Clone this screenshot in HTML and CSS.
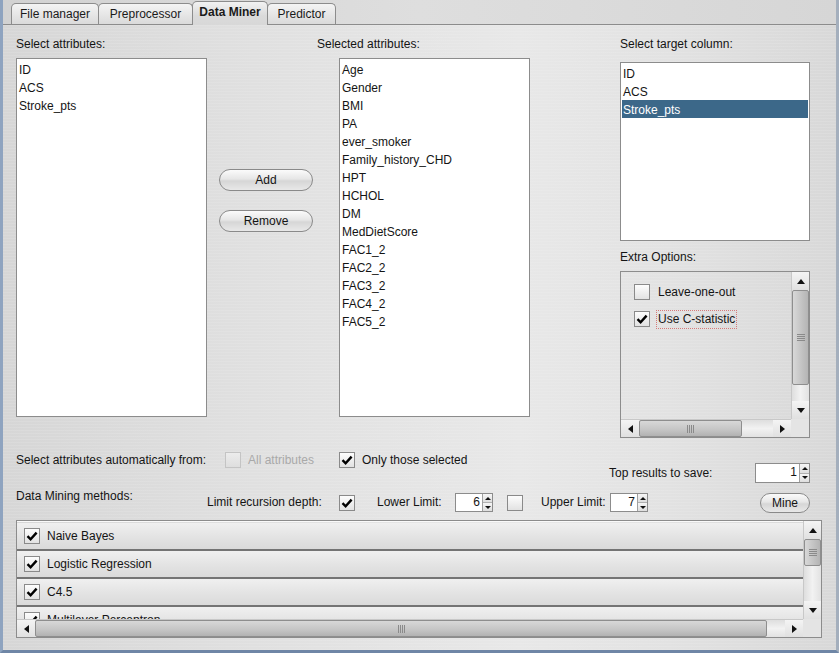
FILE: index.html
```html
<!DOCTYPE html>
<html>
<head>
<meta charset="utf-8">
<link rel="stylesheet" href="styles.css">
</head>
<body>
<div class="window">
  <div class="tabs">
    <div class="tab t1">File manager</div>
    <div class="tab t2">Preprocessor</div>
    <div class="tab t3 active">Data Miner</div>
    <div class="tab t4">Predictor</div>
  </div>
  <div class="panel">
    <div class="top">
      <div class="col col-a">
        <div class="label">Select attributes:</div>
        <div class="list list-big">
          <div class="item">ID</div>
          <div class="item">ACS</div>
          <div class="item">Stroke_pts</div>
        </div>
      </div>
      <div class="col col-b">
        <div class="btn btn-wide">Add</div>
        <div class="btn btn-wide btn-second">Remove</div>
      </div>
      <div class="col col-c">
        <div class="label">Selected attributes:</div>
        <div class="list list-big list-c">
          <div class="item">Age</div>
          <div class="item">Gender</div>
          <div class="item">BMI</div>
          <div class="item">PA</div>
          <div class="item">ever_smoker</div>
          <div class="item">Family_history_CHD</div>
          <div class="item">HPT</div>
          <div class="item">HCHOL</div>
          <div class="item">DM</div>
          <div class="item">MedDietScore</div>
          <div class="item">FAC1_2</div>
          <div class="item">FAC2_2</div>
          <div class="item">FAC3_2</div>
          <div class="item">FAC4_2</div>
          <div class="item">FAC5_2</div>
        </div>
      </div>
      <div class="col col-d">
        <div class="label label-tall">Select target column:</div>
        <div class="list list-target">
          <div class="item">ID</div>
          <div class="item">ACS</div>
          <div class="item selected">Stroke_pts</div>
        </div>
        <div class="label label-extra">Extra Options:</div>
        <div class="scrollpane extra">
          <div class="extra-content">
            <div class="opt">
              <span class="cb"></span>
              <span class="opt-label">Leave-one-out</span>
            </div>
            <div class="opt">
              <span class="cb"><svg width="14" height="14" viewBox="0 0 14 14"><path d="M2.5 7.2 L5.6 10.3 L11.6 3.6" fill="none" stroke="#000" stroke-width="2.4"/></svg></span>
              <span class="opt-label focus">Use C-statistic</span>
            </div>
          </div>
          <div class="vbar">
            <div class="abtn"><span class="tri up"></span></div>
            <div class="vthumb extra-vthumb"><span class="hgrip"></span></div>
            <div class="track"></div>
            <div class="abtn"><span class="tri down"></span></div>
          </div>
          <div class="hbar">
            <div class="abtn"><span class="tri left"></span></div>
            <div class="hthumb extra-hthumb"><span class="vgrip"></span></div>
            <div class="track"></div>
            <div class="abtn"><span class="tri right"></span></div>
          </div>
          <div class="corner"></div>
        </div>
      </div>
    </div>

    <div class="mid">
      <div class="row row1">
        <div class="grp grp-auto">
          <span class="txt w-auto">Select attributes automatically from:</span>
          <span class="cb disabled"></span>
          <span class="txt dis w-all">All attributes</span>
          <span class="cb"><svg width="14" height="14" viewBox="0 0 14 14"><path d="M2.5 7.2 L5.6 10.3 L11.6 3.6" fill="none" stroke="#000" stroke-width="2.4"/></svg></span>
          <span class="txt gap7">Only those selected</span>
        </div>
        <div class="grp grp-top">
          <span class="txt w-top">Top results to save:</span>
          <div class="spin spin-top">
            <span class="spin-val">1</span>
            <span class="spin-btns"><span class="sb"><span class="tri up small"></span></span><span class="sb"><span class="tri down small"></span></span></span>
          </div>
        </div>
      </div>
      <div class="row row2">
        <span class="txt w-dm dm-label">Data Mining methods:</span>
        <div class="grp grp-limit">
          <span class="txt w-lrd">Limit recursion depth:</span>
          <span class="cb"><svg width="14" height="14" viewBox="0 0 14 14"><path d="M2.5 7.2 L5.6 10.3 L11.6 3.6" fill="none" stroke="#000" stroke-width="2.4"/></svg></span>
          <span class="txt w-lower">Lower Limit:</span>
          <div class="spin spin-small">
            <span class="spin-val">6</span>
            <span class="spin-btns"><span class="sb"><span class="tri up small"></span></span><span class="sb"><span class="tri down small"></span></span></span>
          </div>
          <span class="cb cb-upper"></span>
          <span class="txt w-upper">Upper Limit:</span>
          <div class="spin spin-small">
            <span class="spin-val">7</span>
            <span class="spin-btns"><span class="sb"><span class="tri up small"></span></span><span class="sb"><span class="tri down small"></span></span></span>
          </div>
        </div>
        <div class="btn btn-mine">Mine</div>
      </div>
    </div>

    <div class="scrollpane methods">
      <div class="methods-content">
        <div class="mrow">
          <span class="cb"><svg width="14" height="14" viewBox="0 0 14 14"><path d="M2.5 7.2 L5.6 10.3 L11.6 3.6" fill="none" stroke="#000" stroke-width="2.4"/></svg></span>
          <span class="mlabel">Naive Bayes</span>
        </div>
        <div class="mrow">
          <span class="cb"><svg width="14" height="14" viewBox="0 0 14 14"><path d="M2.5 7.2 L5.6 10.3 L11.6 3.6" fill="none" stroke="#000" stroke-width="2.4"/></svg></span>
          <span class="mlabel">Logistic Regression</span>
        </div>
        <div class="mrow">
          <span class="cb"><svg width="14" height="14" viewBox="0 0 14 14"><path d="M2.5 7.2 L5.6 10.3 L11.6 3.6" fill="none" stroke="#000" stroke-width="2.4"/></svg></span>
          <span class="mlabel">C4.5</span>
        </div>
        <div class="mrow">
          <span class="cb"><svg width="14" height="14" viewBox="0 0 14 14"><path d="M2.5 7.2 L5.6 10.3 L11.6 3.6" fill="none" stroke="#000" stroke-width="2.4"/></svg></span>
          <span class="mlabel">Multilayer Perceptron</span>
        </div>
      </div>
      <div class="vbar">
        <div class="abtn"><span class="tri up"></span></div>
        <div class="vthumb methods-vthumb"><span class="hgrip"></span></div>
        <div class="track"></div>
        <div class="abtn"><span class="tri down"></span></div>
      </div>
      <div class="hbar">
        <div class="abtn"><span class="tri left"></span></div>
        <div class="hthumb methods-hthumb"><span class="vgrip"></span></div>
        <div class="track"></div>
        <div class="abtn"><span class="tri right"></span></div>
      </div>
      <div class="corner"></div>
    </div>
  </div>
</div>
</body>
</html>
```

FILE: styles.css
```css
* { box-sizing: border-box; }
html, body { margin: 0; padding: 0; }
body {
  width: 839px;
  height: 653px;
  overflow: hidden;
  font-family: "Liberation Sans", Arial, sans-serif;
  font-size: 12px;
  color: #141414;
  background: #c8d0da;
}
.window {
  width: 839px;
  height: 653px;
  display: flex;
  flex-direction: column;
  border-left: 3px solid #8ea3bf;
  border-right: 3px solid #a4afbd;
  border-bottom: 3px solid #6f86a6;
  background: #dcdcdc;
}

/* tabs */
.tabs {
  height: 25px;
  flex: none;
  display: flex;
  align-items: flex-end;
  padding-left: 8px;
  border-bottom: 1px solid #8c8c8c;
  background: linear-gradient(90deg, #d2d2d2, #dedede 50%, #d6d6d6);
}
.tab {
  height: 21px;
  border: 1px solid #8c8c8c;
  border-bottom: none;
  border-radius: 5px 5px 0 0;
  background: linear-gradient(#f4f4f4, #dadada);
  text-align: center;
  line-height: 20px;
  margin-right: -1px;
  color: #1a1a1a;
}
.t1 { width: 88px; }
.t2 { width: 95px; }
.t3 { width: 76px; }
.t4 { width: 69px; }
.tab.active {
  height: 24px;
  margin-bottom: -1px;
  font-weight: bold;
  line-height: 21px;
  background: linear-gradient(#f2f2f2, #dadada 60%, #d8d8d8);
  position: relative;
  z-index: 1;
}

/* panel */
.panel {
  flex: 1;
  padding: 12px 0 0 13px;
  background:
    repeating-linear-gradient(0deg, rgba(255,255,255,0.10) 0 1px, rgba(0,0,0,0) 1px 3px),
    linear-gradient(90deg, #d6d6d6 0%, #e0e0e0 30%, #e8e8e8 62%, #e2e2e2 80%, #d8d8d8 100%);
}
.top {
  display: flex;
  height: 401px;
}
.col { display: flex; flex-direction: column; }
.col-a { width: 191px; }
.col-b { margin-left: 12px; width: 94px; padding-top: 132px; }
.col-c { margin-left: 4px; width: 213px; }
.col-d { margin-left: 90px; width: 190px; }

.label {
  height: 21px;
  line-height: 15px;
  white-space: nowrap;
}
.label-tall { height: 25px; }
.label-extra { margin-top: 9px; }

.list {
  background: #fff;
  border: 1px solid #8c8c8c;
  padding-top: 1px;
}
.list-big { height: 359px; width: 191px; }
.list-c { margin-left: 22px; }
.list-target { height: 180px; }
.item {
  height: 18px;
  line-height: 18px;
  margin: 0 1px;
  padding: 1px 0 0 1px;
  white-space: nowrap;
}
.item.selected { background: #3c6889; color: #fff; }

/* buttons */
.btn {
  border: 1px solid #8a8a8a;
  border-radius: 11px;
  background: linear-gradient(#fbfbfb, #e6e6e6 45%, #d6d6d6 55%, #e8e8e8);
  text-align: center;
  color: #141414;
}
.btn-wide { width: 94px; height: 22px; line-height: 20px; }
.btn-second { margin-top: 19px; }
.btn-mine { width: 50px; height: 20px; line-height: 18px; margin-left: auto; margin-top: 11px; border-radius: 10px; }

/* checkboxes */
.cb {
  width: 16px;
  height: 16px;
  flex: none;
  border: 1px solid #8a8a8a;
  background: linear-gradient(#fdfdfd, #e2e2e2);
  display: inline-flex;
  align-items: center;
  justify-content: center;
}
.cb.disabled { border-color: #c4c4c4; background: linear-gradient(#ececec, #dedede); }

/* scroll panes */
.scrollpane {
  border: 1px solid #8c8c8c;
  display: grid;
  grid-template-columns: 1fr 18px;
  grid-template-rows: 1fr 18px;
}
.extra { height: 167px; width: 190px; }
.extra-content {
  padding: 12px 0 0 13px;
  overflow: hidden;
}
.opt {
  display: flex;
  align-items: center;
  height: 16px;
  margin-bottom: 11px;
}
.opt-label { margin-left: 8px; white-space: nowrap; line-height: 15px; }
.opt-label.focus {
  margin-left: 6px;
  padding: 1px 1px;
  border: 1px dotted #d47a7a;
}

.vbar {
  display: flex;
  flex-direction: column;
  background: linear-gradient(90deg, #dedede, #f2f2f2 50%, #e2e2e2);
  border-left: 1px solid #c8c8c8;
}
.hbar {
  display: flex;
  background: linear-gradient(#dedede, #f2f2f2 50%, #e2e2e2);
  border-top: 1px solid #c8c8c8;
}
.corner { background: #e4e4e4; }
.abtn {
  flex: none;
  width: 17px;
  height: 17px;
  display: flex;
  align-items: center;
  justify-content: center;
  background: linear-gradient(#f4f4f4, #e0e0e0);
}
.vbar .abtn { width: 100%; height: 18px; }
.hbar .abtn { width: 18px; height: 100%; }
.track { flex: 1; }
.vthumb {
  flex: none;
  border: 1px solid #8e8e8e;
  border-radius: 2px;
  background: linear-gradient(90deg, #d8d8d8, #c2c2c2 60%, #b4b4b4);
  display: flex;
  align-items: center;
  justify-content: center;
}
.hthumb {
  flex: none;
  border: 1px solid #8e8e8e;
  border-radius: 2px;
  background: linear-gradient(#d8d8d8, #c4c4c4 60%, #b2b2b2);
  display: flex;
  align-items: center;
  justify-content: center;
}
.extra-vthumb { height: 95px; }
.extra-hthumb { width: 103px; }
.methods-vthumb { height: 27px; }
.methods-hthumb { width: 732px; }
.hgrip {
  width: 8px;
  height: 7px;
  background: repeating-linear-gradient(#8a8a8a 0 1px, rgba(0,0,0,0) 1px 2px);
}
.vgrip {
  width: 7px;
  height: 8px;
  background: repeating-linear-gradient(90deg, #8a8a8a 0 1px, rgba(0,0,0,0) 1px 2px);
}
.tri { width: 0; height: 0; display: block; }
.tri.up { border-left: 4px solid transparent; border-right: 4px solid transparent; border-bottom: 5px solid #111; }
.tri.down { border-left: 4px solid transparent; border-right: 4px solid transparent; border-top: 5px solid #111; }
.tri.left { border-top: 4px solid transparent; border-bottom: 4px solid transparent; border-right: 5px solid #111; }
.tri.right { border-top: 4px solid transparent; border-bottom: 4px solid transparent; border-left: 5px solid #111; }
.tri.small.up { border-left-width: 3px; border-right-width: 3px; border-bottom-width: 3px; }
.tri.small.down { border-left-width: 3px; border-right-width: 3px; border-top-width: 3px; }

/* middle controls */
.mid { width: 794px; }
.row { display: flex; align-items: flex-start; }
.row1 { margin-top: 14px; height: 30px; }
.row2 { height: 31px; }
.grp { display: flex; align-items: center; }
.grp-auto { height: 16px; }
.grp-top { margin-left: auto; margin-top: 11px; height: 20px; }
.grp-limit { height: 19px; margin-top: 11px; }
.txt { white-space: nowrap; line-height: 15px; flex: none; }
.dis { color: #a9a9a9; }
.w-auto { width: 209px; }
.w-all { width: 91px; margin-left: 7px; }
.gap7 { margin-left: 7px; }
.w-top { width: 146px; }
.w-dm { width: 191px; }
.dm-label { margin-top: 7px; }
.w-lrd { width: 132px; }
.w-lower { width: 78px; margin-left: 22px; }
.cb-upper { margin-left: 14px; }
.w-upper { width: 69px; margin-left: 18px; }

.spin {
  display: flex;
  border: 1px solid #8c8c8c;
  background: #fff;
  flex: none;
}
.spin-top { width: 55px; height: 20px; }
.spin-small { width: 38px; height: 19px; }
.spin-val {
  flex: 1;
  text-align: right;
  padding-right: 2px;
  line-height: 17px;
}
.spin-btns {
  width: 10px;
  display: flex;
  flex-direction: column;
  border-left: 1px solid #a0a0a0;
}
.sb {
  flex: 1;
  display: flex;
  align-items: center;
  justify-content: center;
  background: linear-gradient(#f6f6f6, #dedede);
}
.sb + .sb { border-top: 1px solid #b0b0b0; }

/* methods */
.methods {
  margin-top: 7px;
  width: 806px;
  height: 118px;
}
.methods-content {
  overflow: hidden;
  border-top: 1px solid #fafafa;
  padding-top: 1px;
}
.mrow {
  height: 28px;
  display: flex;
  align-items: center;
  padding-left: 7px;
  border-bottom: 2px solid #747474;
  background: linear-gradient(#f0f0f0, #e4e4e4 50%, #dadada);
}
.mlabel { margin-left: 7px; white-space: nowrap; }
```
